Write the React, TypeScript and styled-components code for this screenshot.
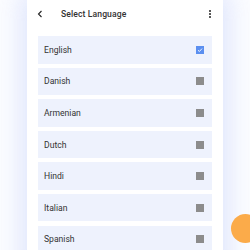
import React from "react";
import styled, { createGlobalStyle } from "styled-components";

const Global = createGlobalStyle`
  html, body { margin: 0; padding: 0; width: 250px; height: 250px; overflow: hidden; background: #ffffff; }
  #root { width: 250px; height: 250px; }
`;

const Page = styled.div`
  position: relative;
  width: 250px;
  height: 250px;
  overflow: hidden;
  display: flex;
  justify-content: center;
  background: #fbfcff;
  font-family: Roboto, "Liberation Sans", sans-serif;
`;

const Card = styled.div`
  width: 196px;
  height: 270px;
  background: #ffffff;
  box-shadow: 0 0 22px 6px rgba(200, 212, 250, 0.55);
  display: flex;
  flex-direction: column;
  padding: 0 11px;
  box-sizing: border-box;
`;

const Header = styled.div`
  height: 28px;
  display: flex;
  align-items: center;
  color: #222;
`;

const Back = styled.svg`
  width: 8px;
  height: 8px;
  margin-left: -2px;
  margin-right: 17px;
`;

const Title = styled.div`
  flex: 1;
  font-size: 8.6px;
  font-weight: 500;
  color: #333;
  letter-spacing: 0.1px;
`;

const Kebab = styled.div`
  display: flex;
  flex-direction: column;
  gap: 1.3px;
  margin-right: 1px;
  span {
    width: 2px;
    height: 2px;
    border-radius: 50%;
    background: #222;
  }
`;

const List = styled.div`
  margin-top: 8px;
  display: flex;
  flex-direction: column;
  gap: 4.1px;
`;

const Row = styled.div`
  height: 27.5px;
  background: #eef2fd;
  display: flex;
  align-items: center;
  justify-content: space-between;
  padding: 0 8px 0 6px;
`;

const Label = styled.span`
  font-size: 8.6px;
  color: #333;
`;

const Box = styled.div<{ $checked?: boolean }>`
  width: 8px;
  height: 8px;
  background: ${(p) => (p.$checked ? "#5b8ff0" : "#8c8c8c")};
  display: flex;
  align-items: center;
  justify-content: center;
`;

const Fab = styled.div`
  position: absolute;
  left: 231px;
  top: 214px;
  width: 29px;
  height: 29px;
  border-radius: 50%;
  background: #fbab4a;
`;

const langs = ["English", "Danish", "Armenian", "Dutch", "Hindi", "Italian", "Spanish"];

export default function App() {
  return (
    <>
      <Global />
      <Page>
        <Card>
          <Header>
            <Back viewBox="0 0 8 8">
              <path d="M5.5 1 L2.5 4 L5.5 7" fill="none" stroke="#222" strokeWidth="1.1" />
            </Back>
            <Title>Select Language</Title>
            <Kebab>
              <span />
              <span />
              <span />
            </Kebab>
          </Header>
          <List>
            {langs.map((l, i) => (
              <Row key={l}>
                <Label>{l}</Label>
                <Box $checked={i === 0}>
                  {i === 0 && (
                    <svg width="6" height="6" viewBox="0 0 6 6">
                      <path d="M1 3.2 L2.4 4.5 L5 1.6" fill="none" stroke="#fff" strokeWidth="0.9" />
                    </svg>
                  )}
                </Box>
              </Row>
            ))}
          </List>
        </Card>
        <Fab />
      </Page>
    </>
  );
}
